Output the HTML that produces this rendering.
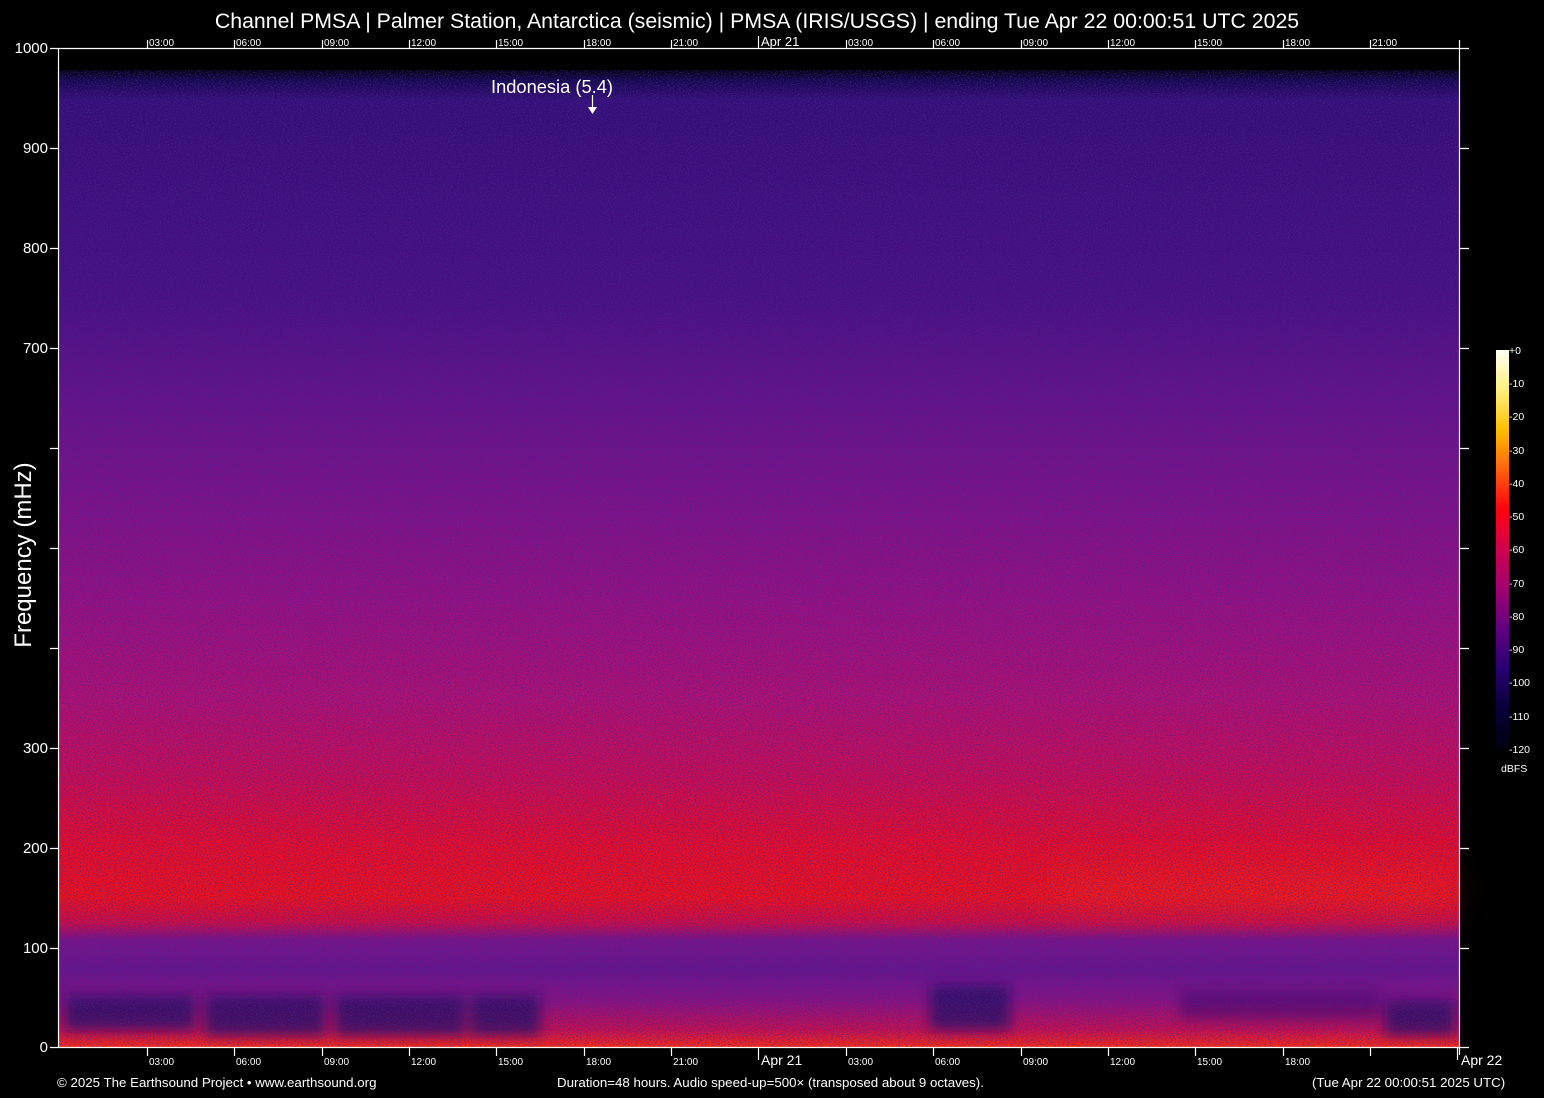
<!DOCTYPE html>
<html><head><meta charset="utf-8"><style>
html,body{margin:0;padding:0;background:#000;}
svg{display:block;}
text{font-family:"Liberation Sans",sans-serif;fill:#fff;}
</style></head><body>
<svg width="1544" height="1098" viewBox="0 0 1544 1098" xmlns="http://www.w3.org/2000/svg">
<defs>
<linearGradient id="sp" x1="0" y1="0" x2="0" y2="1">
<stop offset="0" stop-color="#000"/>
<stop offset="0.022" stop-color="#02010a"/>
<stop offset="0.032" stop-color="#14084a"/>
<stop offset="0.052" stop-color="#360e76"/>
<stop offset="0.25" stop-color="#4a1080"/>
<stop offset="0.35" stop-color="#661288"/>
<stop offset="0.45" stop-color="#7e1286"/>
<stop offset="0.55" stop-color="#981080"/>
<stop offset="0.65" stop-color="#b21070"/>
<stop offset="0.73" stop-color="#cc0c50"/>
<stop offset="0.80" stop-color="#ec0c24"/>
<stop offset="0.85" stop-color="#f21018"/>
<stop offset="0.875" stop-color="#d00c40"/>
<stop offset="0.893" stop-color="#7a1488"/>
<stop offset="0.923" stop-color="#6a148a"/>
<stop offset="0.953" stop-color="#8a1280"/>
<stop offset="0.983" stop-color="#c8104c"/>
<stop offset="1" stop-color="#ff2a10"/>
</linearGradient>
<linearGradient id="cb" x1="0" y1="0" x2="0" y2="1">
<stop offset="0" stop-color="#fffff4"/>
<stop offset="0.1" stop-color="#fff080"/>
<stop offset="0.2" stop-color="#ffc000"/>
<stop offset="0.3" stop-color="#ff6010"/>
<stop offset="0.4" stop-color="#ff0010"/>
<stop offset="0.5" stop-color="#d00050"/>
<stop offset="0.6" stop-color="#a00070"/>
<stop offset="0.7" stop-color="#600080"/>
<stop offset="0.8" stop-color="#280070"/>
<stop offset="0.9" stop-color="#080038"/>
<stop offset="1" stop-color="#000010"/>
</linearGradient>
<filter id="nz" x="0" y="0" width="100%" height="100%">
<feTurbulence type="fractalNoise" baseFrequency="0.6 0.9" numOctaves="2" seed="3"/>
<feColorMatrix type="matrix" values="0 0 0 0 0.05  0 0 0 0 0.02  0 0 0 0 0.3  0 0 0 -2.4 1.35"/>
</filter>
<filter id="bl" x="-20%" y="-50%" width="140%" height="200%"><feGaussianBlur stdDeviation="6"/></filter>
<filter id="bl2" x="-30%" y="-100%" width="160%" height="300%"><feGaussianBlur stdDeviation="18"/></filter>
</defs>
<rect x="58" y="48" width="1401" height="999" fill="url(#sp)"/>
<rect x="1050" y="870" width="400" height="40" fill="#ff3010" opacity="0.3" filter="url(#bl2)"/>
<g fill="#200a60" opacity="0.75" filter="url(#bl)">
<rect x="65" y="995" width="130" height="35"/>
<rect x="205" y="995" width="120" height="40"/>
<rect x="335" y="995" width="130" height="40"/>
<rect x="470" y="995" width="70" height="40"/>
<rect x="930" y="985" width="80" height="45"/>
<rect x="1385" y="1000" width="70" height="35"/>
<rect x="1180" y="990" width="200" height="30" opacity="0.5"/>
</g>
<rect x="58" y="70" width="1401" height="977" filter="url(#nz)" opacity="0.75"/>
<rect x="58" y="48" width="1401" height="22" fill="#000"/>
<g stroke="#fff" stroke-width="1.2" fill="none">
<line x1="58" y1="48.5" x2="1469" y2="48.5"/>
<line x1="58" y1="1047.5" x2="1469" y2="1047.5"/>
<line x1="58.5" y1="48" x2="58.5" y2="1047"/>
<line x1="1459.5" y1="40" x2="1459.5" y2="1055"/>
<path d="M50 48.5h8M50 148.5h8M50 248.5h8M50 348.5h8M50 448.5h8M50 548.5h8M50 648.5h8M50 748.5h8M50 848.5h8M50 948.5h8M50 1047.5h8"/>
<path d="M1460 148.5h9M1460 248.5h9M1460 348.5h9M1460 448.5h9M1460 548.5h9M1460 648.5h9M1460 748.5h9M1460 848.5h9M1460 948.5h9"/>
<path d="M147.5 40v8M234.5 40v8M322.5 40v8M409.5 40v8M496.5 40v8M584.5 40v8M671.5 40v8M758.5 36v12M846.5 40v8M933.5 40v8M1021.5 40v8M1108.5 40v8M1195.5 40v8M1283.5 40v8M1370.5 40v8"/>
<path d="M147.5 1048v8M234.5 1048v8M322.5 1048v8M409.5 1048v8M496.5 1048v8M584.5 1048v8M671.5 1048v8M758.5 1048v12M846.5 1048v8M933.5 1048v8M1021.5 1048v8M1108.5 1048v8M1195.5 1048v8M1283.5 1048v8M1370.5 1048v8M1457.5 1048v12"/>
<line x1="592.5" y1="95" x2="592.5" y2="108"/>
</g>
<path d="M588 107h9l-4.5 7z" fill="#fff"/>
<text x="757" y="28" font-size="21.3" text-anchor="middle">Channel PMSA | Palmer Station, Antarctica (seismic) | PMSA (IRIS/USGS) | ending Tue Apr 22 00:00:51 UTC 2025</text>
<g font-size="10">
<text x="149" y="46">03:00</text><text x="236" y="46">06:00</text><text x="324" y="46">09:00</text><text x="411" y="46">12:00</text><text x="498" y="46">15:00</text><text x="586" y="46">18:00</text><text x="673" y="46">21:00</text><text x="848" y="46">03:00</text><text x="935" y="46">06:00</text><text x="1023" y="46">09:00</text><text x="1110" y="46">12:00</text><text x="1197" y="46">15:00</text><text x="1285" y="46">18:00</text><text x="1372" y="46">21:00</text>
<text x="149" y="1065">03:00</text><text x="236" y="1065">06:00</text><text x="324" y="1065">09:00</text><text x="411" y="1065">12:00</text><text x="498" y="1065">15:00</text><text x="586" y="1065">18:00</text><text x="673" y="1065">21:00</text><text x="848" y="1065">03:00</text><text x="935" y="1065">06:00</text><text x="1023" y="1065">09:00</text><text x="1110" y="1065">12:00</text><text x="1197" y="1065">15:00</text><text x="1285" y="1065">18:00</text>
</g>
<text x="761" y="46" font-size="13">Apr 21</text>
<text x="761" y="1065" font-size="14">Apr 21</text>
<text x="1461" y="1065" font-size="14">Apr 22</text>
<g font-size="15" text-anchor="end">
<text x="48" y="53">1000</text><text x="48" y="153">900</text><text x="48" y="253">800</text><text x="48" y="353">700</text><text x="48" y="753">300</text><text x="48" y="853">200</text><text x="48" y="953">100</text><text x="48" y="1052">0</text>
</g>
<text transform="translate(31 555) rotate(-90)" font-size="24" text-anchor="middle">Frequency (mHz)</text>
<text x="491" y="93" font-size="18.3">Indonesia (5.4)</text>
<rect x="1496" y="350" width="13" height="399" fill="url(#cb)"/>
<g font-size="10.5" fill="#fff">
<text x="1509" y="354">+0</text><text x="1509" y="387">-10</text><text x="1509" y="420">-20</text><text x="1509" y="454">-30</text><text x="1509" y="487">-40</text><text x="1509" y="520">-50</text><text x="1509" y="553">-60</text><text x="1509" y="587">-70</text><text x="1509" y="620">-80</text><text x="1509" y="653">-90</text><text x="1509" y="686">-100</text><text x="1509" y="720">-110</text><text x="1509" y="753">-120</text>
<text x="1501" y="772">dBFS</text>
</g>
<g font-size="13.3">
<text x="57" y="1087">© 2025 The Earthsound Project • www.earthsound.org</text>
<text x="557" y="1087">Duration=48 hours. Audio speed-up=500× (transposed about 9 octaves).</text>
<text x="1312" y="1087">(Tue Apr 22 00:00:51 2025 UTC)</text>
</g>
</svg>
</body></html>
